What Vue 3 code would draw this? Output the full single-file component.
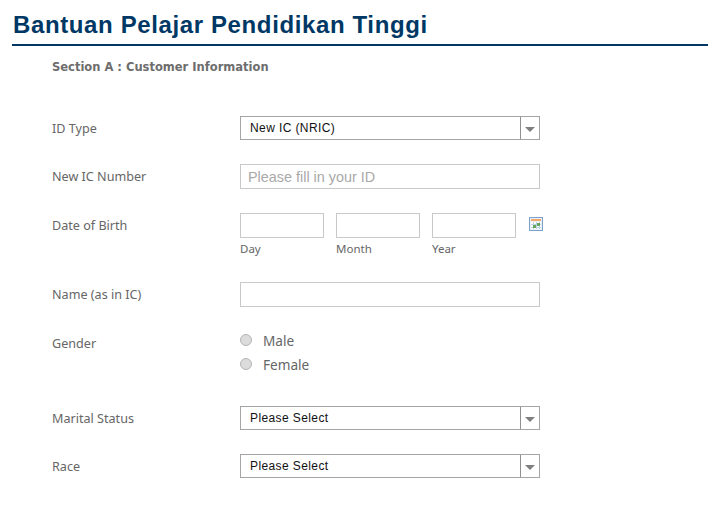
<template>
  <div class="page">
    <h1 class="title">Bantuan Pelajar Pendidikan Tinggi</h1>
    <div class="section-title">Section A : Customer Information</div>

    <div class="form">
      <div class="row row-id">
        <label class="field-label">ID Type</label>
        <div class="select">
          <span class="select-value">New IC (NRIC)</span>
          <span class="select-btn"><span class="arrow"></span></span>
        </div>
      </div>

      <div class="row row-ic">
        <label class="field-label">New IC Number</label>
        <input class="text-input wide" type="text" placeholder="Please fill in your ID" />
      </div>

      <div class="row row-dob">
        <label class="field-label">Date of Birth</label>
        <div class="date-group">
          <div v-for="part in dateParts" :key="part" class="date-part">
            <input class="text-input small" type="text" />
            <span class="date-hint">{{ part }}</span>
          </div>
          <svg class="cal-icon" width="14" height="14" viewBox="0 0 14 14">
            <rect x="0.5" y="0.5" width="13" height="13" fill="#e6effa" stroke="#7da2ce" />
            <rect x="2" y="2" width="10" height="2" fill="#f6a96a" />
            <rect x="2" y="5" width="10" height="7" fill="#fff" />
            <path d="M2 7.5h10M2 10.5h10M4.5 5v7M7.5 5v7M10.5 5v7" stroke="#bcd0e8" stroke-width="1" />
            <rect x="4" y="8" width="3" height="3" fill="#63a75c" />
            <rect x="8" y="6" width="3" height="3" fill="#63a75c" />
          </svg>
        </div>
      </div>

      <div class="row row-name">
        <label class="field-label">Name (as in IC)</label>
        <input class="text-input wide" type="text" />
      </div>

      <div class="row row-gender">
        <label class="field-label">Gender</label>
        <div class="radio-group">
          <div v-for="g in genders" :key="g" class="radio-line">
            <span class="radio"></span>
            <span class="radio-text">{{ g }}</span>
          </div>
        </div>
      </div>

      <div class="row row-marital">
        <label class="field-label">Marital Status</label>
        <div class="select">
          <span class="select-value">Please Select</span>
          <span class="select-btn"><span class="arrow"></span></span>
        </div>
      </div>

      <div class="row row-race">
        <label class="field-label">Race</label>
        <div class="select">
          <span class="select-value">Please Select</span>
          <span class="select-btn"><span class="arrow"></span></span>
        </div>
      </div>
    </div>
  </div>
</template>

<script setup>
const dateParts = ['Day', 'Month', 'Year']
const genders = ['Male', 'Female']
</script>

<style>
html, body {
  margin: 0;
  background: #fff;
  overflow: hidden;
}
</style>

<style scoped>
.page {
  width: 708px;
  height: 510px;
  padding-left: 12px;
  box-sizing: border-box;
  font-family: "Noto Sans", sans-serif;
  overflow: hidden;
}

.title {
  margin: 0;
  height: 46px;
  box-sizing: border-box;
  padding: 10px 0 0 1px;
  border-bottom: 2px solid #003865;
  font-family: "Liberation Sans", Arial, sans-serif;
  font-size: 24px;
  line-height: 30px;
  font-weight: bold;
  letter-spacing: 0.62px;
  color: #003865;
}

.section-title {
  margin: 14px 0 0 40px;
  font-family: "DejaVu Sans", sans-serif;
  font-size: 11.5px;
  line-height: 14px;
  font-weight: bold;
  color: #6d6d6d;
}

.form {
  margin-top: 42px;
  padding-left: 40px;
}

.row {
  display: grid;
  grid-template-columns: 188px 1fr;
  align-items: start;
}

.row-ic { margin-top: 24px; }
.row-dob { margin-top: 24px; }
.row-name { margin-top: 26px; }
.row-gender { margin-top: 24px; }
.row-marital { margin-top: 29px; }
.row-race { margin-top: 24px; }

.field-label {
  height: 24px;
  font-size: 12.6px;
  line-height: 25px;
  color: #666;
}

.select {
  width: 300px;
  height: 24px;
  box-sizing: border-box;
  border: 1px solid #a5a5a5;
  display: flex;
  background: #fff;
}

.select-value {
  flex: 1;
  padding-left: 9px;
  font-family: "Liberation Sans", Arial, sans-serif;
  font-size: 12px;
  letter-spacing: 0.4px;
  line-height: 23px;
  color: #111;
}

.select-btn {
  width: 18px;
  border-left: 1px solid #8f8f8f;
  display: flex;
  align-items: center;
  justify-content: center;
}

.arrow {
  width: 0;
  height: 0;
  margin-top: 2px;
  border-left: 5px solid transparent;
  border-right: 5px solid transparent;
  border-top: 5px solid #7f7f7f;
}

.text-input {
  display: block;
  box-sizing: border-box;
  height: 25px;
  border: 1px solid #c9c9c9;
  padding: 0 7px;
  margin: 0;
  outline: none;
  background: #fff;
  font-family: "Liberation Sans", Arial, sans-serif;
  font-size: 14.4px;
}

.text-input::placeholder {
  color: #a9a9a9;
  opacity: 1;
}

.wide { width: 300px; }
.small { width: 84px; }

.date-group {
  display: flex;
  align-items: flex-start;
  gap: 12px;
}

.date-hint {
  display: block;
  margin-top: 3px;
  font-size: 11.5px;
  line-height: 15px;
  color: #666;
}

.cal-icon {
  margin: 4px 0 0 1px;
}

.radio-group {
  margin-top: -2px;
}

.radio-line {
  display: flex;
  align-items: center;
  height: 24px;
}

.radio {
  width: 12px;
  height: 12px;
  box-sizing: border-box;
  border-radius: 50%;
  border: 1px solid #b5b5b5;
  background: #dcdcdc;
  margin-right: 11px;
  margin-top: -2px;
}

.radio-text {
  font-size: 13.6px;
  line-height: 24px;
  color: #666;
}
</style>
